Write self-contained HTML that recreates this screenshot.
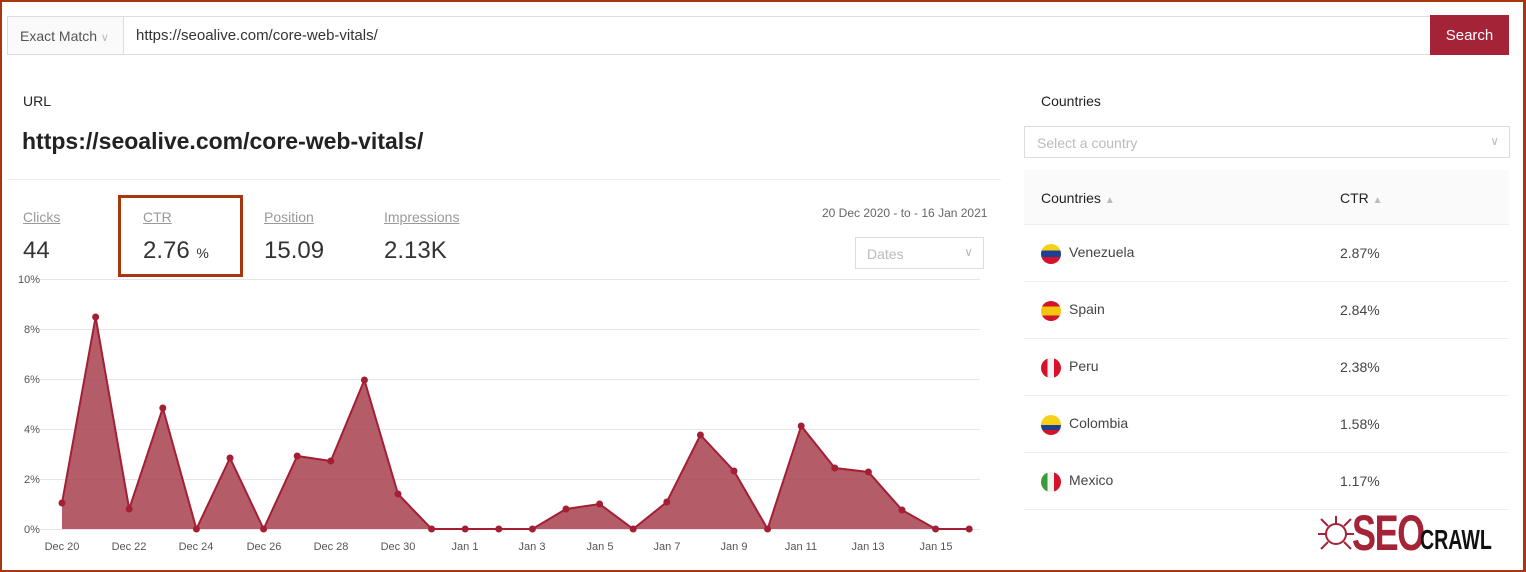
<!DOCTYPE html>
<html><head><meta charset="utf-8"><style>
*{box-sizing:border-box;margin:0;padding:0}
body{width:1526px;height:572px;overflow:hidden;background:#fff;font-family:"Liberation Sans",sans-serif;color:#222;position:relative}
.frame{position:absolute;left:0;top:0;width:1526px;height:572px;border:2px solid #a8360f;border-right-width:3px;border-bottom-width:2px}
.abs{position:absolute}
.u{text-decoration:underline;color:#999;font-size:14px}
.val{font-size:24px;color:#333}
.row{position:absolute;left:1024px;width:485px;height:57px;border-bottom:1px solid #eee;font-size:14px;color:#444}
.flag{position:absolute;left:17px;top:19px;width:20px;height:20px;border-radius:50%;overflow:hidden}
.row .n{position:absolute;left:45px;top:19px}
.row .c{position:absolute;left:316px;top:20px}
</style></head><body>
<div class="frame"></div>
<div class="abs" style="left:7px;top:16px;width:1425px;height:39px;border:1px solid #ddd;background:#fff"></div>
<div class="abs" style="left:7px;top:16px;width:117px;height:39px;border:1px solid #ddd;background:#fafafa;font-size:14px;color:#555;padding:11px 0 0 12px">Exact Match <span style="color:#bbb;font-size:11px">&#8744;</span></div>
<div class="abs" style="left:136px;top:27px;font-size:15px;color:#333">https://seoalive.com/core-web-vitals/</div>
<div class="abs" style="left:1430px;top:15px;width:79px;height:40px;background:#a52337;color:#fff;font-size:15px;text-align:center;line-height:42px">Search</div>
<div class="abs" style="left:23px;top:93px;font-size:14px;color:#222">URL</div>
<div class="abs" style="left:22px;top:128px;font-size:23px;font-weight:bold;color:#222">https://seoalive.com/core-web-vitals/</div>
<div class="abs" style="left:7px;top:179px;width:994px;height:1px;background:#eee"></div>
<div class="abs u" style="left:23px;top:209px">Clicks</div>
<div class="abs val" style="left:23px;top:237px">44</div>
<div class="abs" style="left:118px;top:195px;width:125px;height:82px;border:3px solid #a8360f"></div>
<div class="abs u" style="left:143px;top:209px">CTR</div>
<div class="abs val" style="left:143px;top:237px">2.76 <span style="font-size:14px">%</span></div>
<div class="abs u" style="left:264px;top:209px">Position</div>
<div class="abs val" style="left:264px;top:237px">15.09</div>
<div class="abs u" style="left:384px;top:209px">Impressions</div>
<div class="abs val" style="left:384px;top:237px">2.13K</div>
<div class="abs" style="left:822px;top:206px;font-size:12px;color:#666">20 Dec 2020 - to - 16 Jan 2021</div>
<div class="abs" style="left:855px;top:237px;width:129px;height:32px;border:1px solid #ddd;font-size:14px;color:#bbb;padding:8px 0 0 11px">Dates<span style="position:absolute;right:10px;top:7px;font-size:12px">&#8744;</span></div>
<svg class="abs" style="left:0;top:0" width="1000" height="572">
<g stroke="#e6e6e6" stroke-width="1">
<line x1="40" y1="279.5" x2="980" y2="279.5"/><line x1="40" y1="329.5" x2="980" y2="329.5"/><line x1="40" y1="379.5" x2="980" y2="379.5"/><line x1="40" y1="429.5" x2="980" y2="429.5"/><line x1="40" y1="479.5" x2="980" y2="479.5"/><line x1="40" y1="529.5" x2="980" y2="529.5"/>
</g>
<g font-size="11" fill="#555" font-family="Liberation Sans">
<text x="18" y="283">10%</text><text x="24" y="333">8%</text><text x="24" y="383">6%</text><text x="24" y="433">4%</text><text x="24" y="483">2%</text><text x="24" y="533">0%</text>
</g>
<polygon fill="#a8404f" fill-opacity="0.85" points="62,529 62,503 95.6,317 129.2,509 162.8,408 196.4,529 230,458 263.6,529 297.2,456 330.8,461 364.4,380 398,494 431.6,529 465.2,529 498.8,529 532.4,529 566,509 599.6,504 633.2,529 666.8,502 700.4,435 734,471 767.6,529 801.2,426 834.8,468 868.4,472 902,510 935.6,529 969.2,529"/>
<polyline fill="none" stroke="#a31f34" stroke-width="2" points="62,503 95.6,317 129.2,509 162.8,408 196.4,529 230,458 263.6,529 297.2,456 330.8,461 364.4,380 398,494 431.6,529 465.2,529 498.8,529 532.4,529 566,509 599.6,504 633.2,529 666.8,502 700.4,435 734,471 767.6,529 801.2,426 834.8,468 868.4,472 902,510 935.6,529 969.2,529"/>
<g fill="#a31f34">
<circle cx="62" cy="503" r="3.5"/><circle cx="95.6" cy="317" r="3.5"/><circle cx="129.2" cy="509" r="3.5"/><circle cx="162.8" cy="408" r="3.5"/><circle cx="196.4" cy="529" r="3.5"/><circle cx="230" cy="458" r="3.5"/><circle cx="263.6" cy="529" r="3.5"/><circle cx="297.2" cy="456" r="3.5"/><circle cx="330.8" cy="461" r="3.5"/><circle cx="364.4" cy="380" r="3.5"/><circle cx="398" cy="494" r="3.5"/><circle cx="431.6" cy="529" r="3.5"/><circle cx="465.2" cy="529" r="3.5"/><circle cx="498.8" cy="529" r="3.5"/><circle cx="532.4" cy="529" r="3.5"/><circle cx="566" cy="509" r="3.5"/><circle cx="599.6" cy="504" r="3.5"/><circle cx="633.2" cy="529" r="3.5"/><circle cx="666.8" cy="502" r="3.5"/><circle cx="700.4" cy="435" r="3.5"/><circle cx="734" cy="471" r="3.5"/><circle cx="767.6" cy="529" r="3.5"/><circle cx="801.2" cy="426" r="3.5"/><circle cx="834.8" cy="468" r="3.5"/><circle cx="868.4" cy="472" r="3.5"/><circle cx="902" cy="510" r="3.5"/><circle cx="935.6" cy="529" r="3.5"/><circle cx="969.2" cy="529" r="3.5"/>
</g>
<g font-size="11" fill="#555" text-anchor="middle" font-family="Liberation Sans">
<text x="62" y="550">Dec 20</text><text x="129" y="550">Dec 22</text><text x="196" y="550">Dec 24</text><text x="264" y="550">Dec 26</text><text x="331" y="550">Dec 28</text><text x="398" y="550">Dec 30</text><text x="465" y="550">Jan 1</text><text x="532" y="550">Jan 3</text><text x="600" y="550">Jan 5</text><text x="667" y="550">Jan 7</text><text x="734" y="550">Jan 9</text><text x="801" y="550">Jan 11</text><text x="868" y="550">Jan 13</text><text x="936" y="550">Jan 15</text>
</g>
</svg>
<div class="abs" style="left:1041px;top:93px;font-size:14px;color:#222">Countries</div>
<div class="abs" style="left:1024px;top:126px;width:486px;height:32px;border:1px solid #ddd;font-size:14px;color:#bbb;padding:8px 0 0 12px">Select a country<span style="position:absolute;right:10px;top:7px;font-size:12px">&#8744;</span></div>
<div class="abs" style="left:1024px;top:170px;width:485px;height:55px;background:#fafafa;border-bottom:1px solid #eee;font-size:14px;color:#222">
<span class="abs" style="left:17px;top:20px">Countries <span style="color:#bbb;font-size:10px">&#9650;&#xFE0E;</span></span>
<span class="abs" style="left:316px;top:20px">CTR <span style="color:#bbb;font-size:10px">&#9650;&#xFE0E;</span></span>
</div>
<div class="row" style="top:225px"><div class="flag" style="background:linear-gradient(#f7d117 33%,#1d3f94 33% 66%,#d3122b 66%)"></div><span class="n">Venezuela</span><span class="c">2.87%</span></div>
<div class="row" style="top:282px"><div class="flag" style="background:linear-gradient(#d3122b 27%,#f7c510 27% 73%,#d3122b 73%)"></div><span class="n">Spain</span><span class="c">2.84%</span></div>
<div class="row" style="top:339px"><div class="flag" style="background:linear-gradient(90deg,#d3122b 33%,#f2f2f2 33% 66%,#d3122b 66%)"></div><span class="n">Peru</span><span class="c">2.38%</span></div>
<div class="row" style="top:396px"><div class="flag" style="background:linear-gradient(#f7d117 50%,#1d3f94 50% 75%,#d3122b 75%)"></div><span class="n">Colombia</span><span class="c">1.58%</span></div>
<div class="row" style="top:453px"><div class="flag" style="background:linear-gradient(90deg,#3a9a3a 33%,#f2f2f2 33% 66%,#d3122b 66%)"></div><span class="n">Mexico</span><span class="c">1.17%</span></div>
<svg class="abs" style="left:1316px;top:514px" width="40" height="40" viewBox="0 0 40 40">
<g fill="none" stroke="#a52337" stroke-width="2"><circle cx="20" cy="20" r="10"/><path d="M12 12 L5 5 M28 12 L35 5 M10 20 H2 M30 20 H38 M12 28 L5 35 M28 28 L35 35 M20 10 V2"/></g></svg>
<div class="abs" style="left:1352px;top:511px;font-size:50px;font-weight:bold;color:#a52337;letter-spacing:-2px;transform:scaleX(0.72);transform-origin:left;line-height:44px">SEO</div>
<div class="abs" style="left:1420px;top:528px;font-size:28px;font-weight:bold;color:#111;transform:scaleX(0.7);transform-origin:left;line-height:24px">CRAWL</div>
</body></html>
